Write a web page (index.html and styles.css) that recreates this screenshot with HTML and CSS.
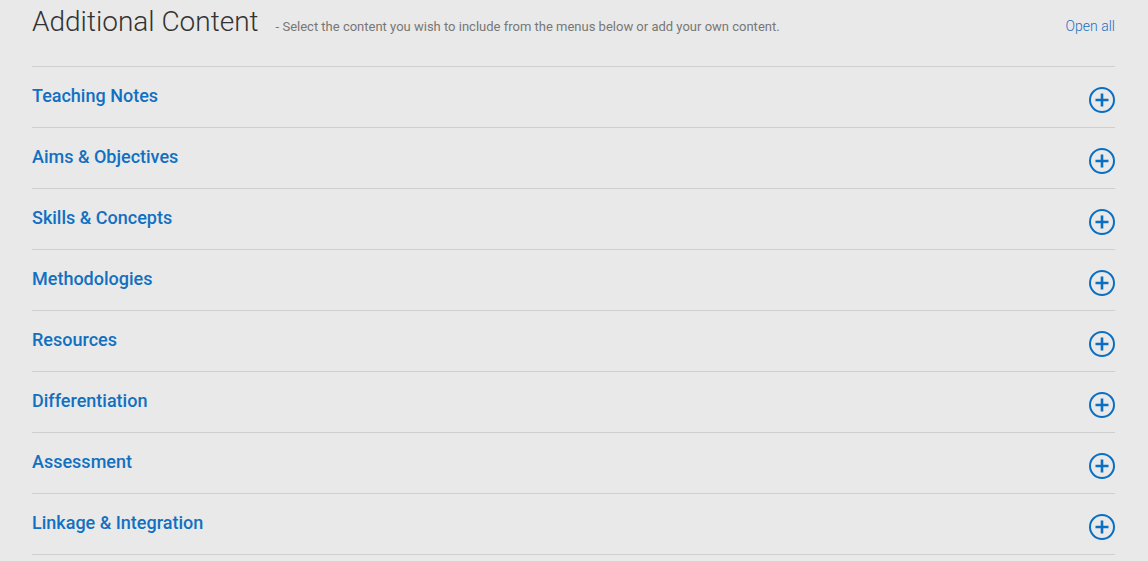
FILE: index.html
```html
<!DOCTYPE html>
<html>
<head>
<meta charset="utf-8">
<link rel="stylesheet" href="styles.css">
</head>
<body>
<div class="panel">
  <div class="header">
    <h1 class="title">Additional Content</h1>
    <span class="subtitle">- Select the content you wish to include from the menus below or add your own content.</span>
    <a class="open-all" href="#">Open all</a>
  </div>
  <ul class="sections">
    <li class="section"><span class="section-name">Teaching Notes</span><svg class="plus" viewBox="0 0 26 26"><circle cx="13" cy="13" r="12" /><path d="M13 6.5v13M6.5 13h13" /></svg></li>
    <li class="section"><span class="section-name">Aims &amp; Objectives</span><svg class="plus" viewBox="0 0 26 26"><circle cx="13" cy="13" r="12" /><path d="M13 6.5v13M6.5 13h13" /></svg></li>
    <li class="section"><span class="section-name">Skills &amp; Concepts</span><svg class="plus" viewBox="0 0 26 26"><circle cx="13" cy="13" r="12" /><path d="M13 6.5v13M6.5 13h13" /></svg></li>
    <li class="section"><span class="section-name">Methodologies</span><svg class="plus" viewBox="0 0 26 26"><circle cx="13" cy="13" r="12" /><path d="M13 6.5v13M6.5 13h13" /></svg></li>
    <li class="section"><span class="section-name">Resources</span><svg class="plus" viewBox="0 0 26 26"><circle cx="13" cy="13" r="12" /><path d="M13 6.5v13M6.5 13h13" /></svg></li>
    <li class="section"><span class="section-name">Differentiation</span><svg class="plus" viewBox="0 0 26 26"><circle cx="13" cy="13" r="12" /><path d="M13 6.5v13M6.5 13h13" /></svg></li>
    <li class="section"><span class="section-name">Assessment</span><svg class="plus" viewBox="0 0 26 26"><circle cx="13" cy="13" r="12" /><path d="M13 6.5v13M6.5 13h13" /></svg></li>
    <li class="section"><span class="section-name">Linkage &amp; Integration</span><svg class="plus" viewBox="0 0 26 26"><circle cx="13" cy="13" r="12" /><path d="M13 6.5v13M6.5 13h13" /></svg></li>
  </ul>
</div>
</body>
</html>
```
FILE: styles.css
```css
html, body {
  margin: 0;
  padding: 0;
  background: #e9e9e9;
  font-family: Roboto, "Liberation Sans", sans-serif;
}

.panel {
  width: 1083px;
  margin-left: 32px;
}

.header {
  display: flex;
  align-items: baseline;
  height: 66px;
  padding-top: 1px;
  box-sizing: border-box;
}

.title {
  margin: 0;
  font-size: 28px;
  font-weight: 300;
  line-height: 42px;
  color: #333;
}

.subtitle {
  margin-left: 17px;
  font-size: 13px;
  color: #777;
}

.open-all {
  margin-left: auto;
  font-size: 14px;
  font-weight: 300;
  color: #1a6fc4;
  text-decoration: none;
}

.sections {
  list-style: none;
  margin: 0;
  padding: 0;
}

.section {
  display: flex;
  justify-content: space-between;
  align-items: flex-start;
  height: 60px;
  border-top: 1px solid #cfcfcf;
}

.section:last-child {
  border-bottom: 1px solid #cfcfcf;
}

.section-name {
  margin-top: 18px;
  font-size: 18px;
  line-height: 22px;
  font-weight: 500;
  color: #1170c1;
}

.plus {
  width: 26px;
  height: 26px;
  margin-top: 20px;
  fill: none;
  stroke: #0a6fc2;
  stroke-width: 2;
}

.plus path {
  stroke-width: 2.6;
}
```
